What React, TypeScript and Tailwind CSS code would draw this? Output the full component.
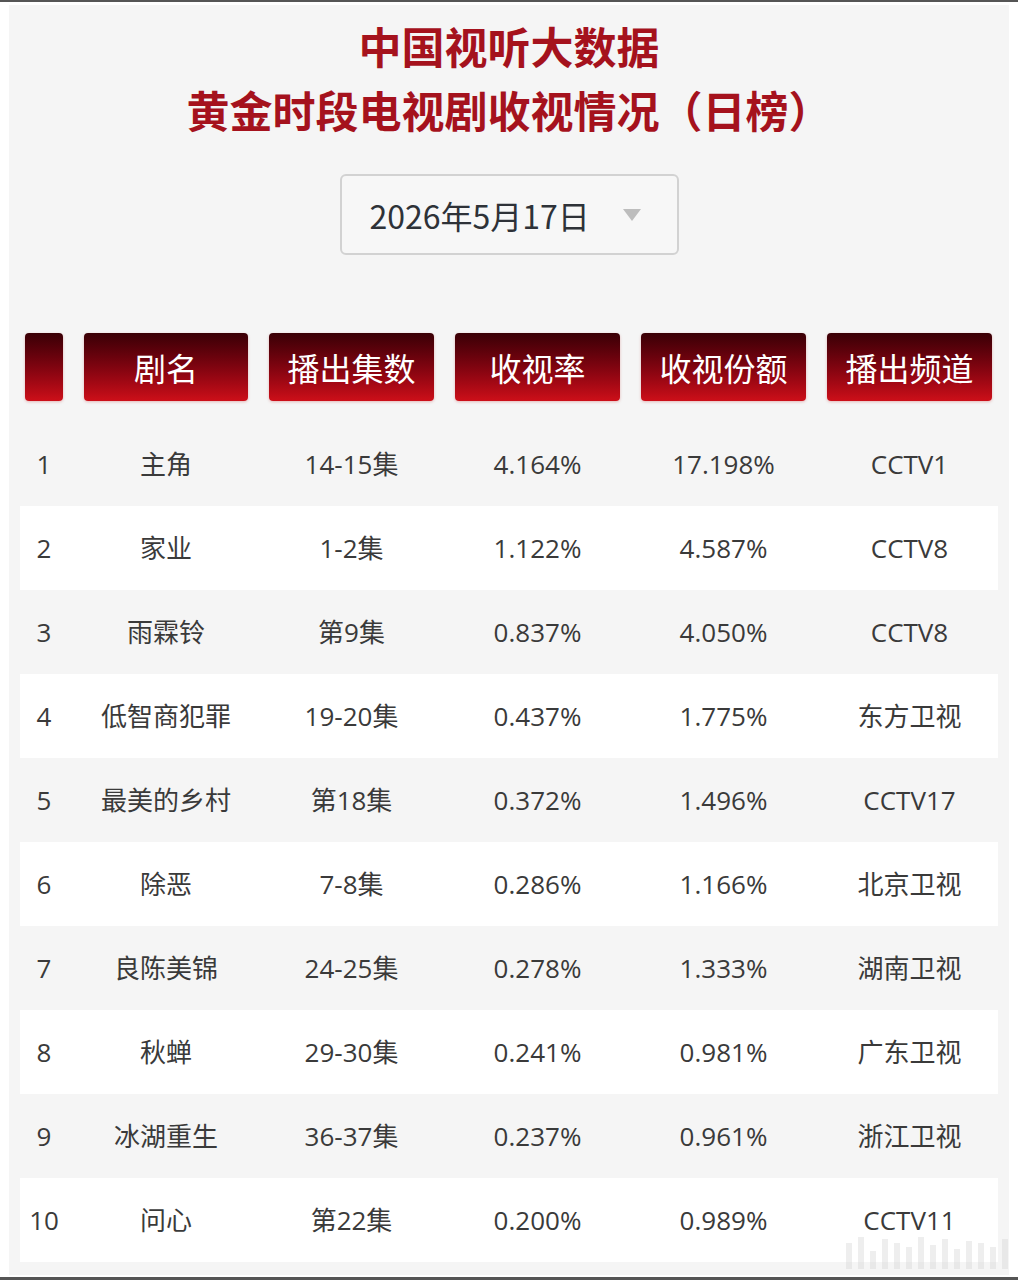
import React from 'react';

const rows = [
  { rank: 1, name: '主角', eps: '14-15集', rating: '4.164%', share: '17.198%', channel: 'CCTV1' },
  { rank: 2, name: '家业', eps: '1-2集', rating: '1.122%', share: '4.587%', channel: 'CCTV8' },
  { rank: 3, name: '雨霖铃', eps: '第9集', rating: '0.837%', share: '4.050%', channel: 'CCTV8' },
  { rank: 4, name: '低智商犯罪', eps: '19-20集', rating: '0.437%', share: '1.775%', channel: '东方卫视' },
  { rank: 5, name: '最美的乡村', eps: '第18集', rating: '0.372%', share: '1.496%', channel: 'CCTV17' },
  { rank: 6, name: '除恶', eps: '7-8集', rating: '0.286%', share: '1.166%', channel: '北京卫视' },
  { rank: 7, name: '良陈美锦', eps: '24-25集', rating: '0.278%', share: '1.333%', channel: '湖南卫视' },
  { rank: 8, name: '秋蝉', eps: '29-30集', rating: '0.241%', share: '0.981%', channel: '广东卫视' },
  { rank: 9, name: '冰湖重生', eps: '36-37集', rating: '0.237%', share: '0.961%', channel: '浙江卫视' },
  { rank: 10, name: '问心', eps: '第22集', rating: '0.200%', share: '0.989%', channel: 'CCTV11' },
];

const headers = ['剧名', '播出集数', '收视率', '收视份额', '播出频道'];

// shared column template so header and rows line up
const cols = 'grid grid-cols-[38px_164px_165px_165px_165px_165px] gap-x-[21px]';

function App() {
  return (
    <div
      className="relative w-[1018px] h-[1280px] bg-white border-t-2 border-b-[3px] border-[#555]"
      style={{ fontFamily: '"Open Sans", "Noto Sans CJK SC", sans-serif' }}
    >
      <div className="mx-[9px] mt-[3px] h-[1270px] bg-[#f5f5f5]">
        {/* Title */}
        <div
          className="pt-[8px] text-center font-bold text-[43px] leading-[64px] text-[#a5121d]"
          style={{ fontFamily: '"Noto Sans CJK SC", sans-serif' }}
        >
          <div>中国视听大数据</div>
          <div>黄金时段电视剧收视情况（日榜）</div>
        </div>

        {/* Date picker */}
        <div className="flex justify-center mt-[33px]">
          <div className="flex items-center w-[339px] h-[81px] rounded-[6px] border-2 border-[#d2d2d2] bg-[#f7f7f7] pl-[28px] pr-[36px]">
            <span
              className="text-[32px] text-[#2e3238]"
              style={{ fontFamily: '"Noto Sans CJK SC", sans-serif' }}
            >
              2026年5月17日
            </span>
            <span className="ml-auto w-0 h-0 border-l-[9px] border-r-[9px] border-t-[12px] border-l-transparent border-r-transparent border-t-[#bdbdbd]" />
          </div>
        </div>

        {/* Header */}
        <div className={`${cols} mt-[78px] pl-[16px] h-[68px]`}>
          <div className="rounded-[4px] bg-linear-to-b from-[#3a0006] to-[#cd0f19] shadow-[0_1px_3px_rgba(180,0,0,0.25)]" />
          {headers.map((h) => (
            <div
              key={h}
              className="flex items-center justify-center rounded-[4px] bg-linear-to-b from-[#3a0006] to-[#cd0f19] text-white text-[32px] shadow-[0_1px_3px_rgba(180,0,0,0.25)]"
              style={{ fontFamily: '"Noto Sans CJK SC", sans-serif' }}
            >
              {h}
            </div>
          ))}
        </div>

        {/* Rows */}
        <div className="mt-[21px] mx-[11px]">
          {rows.map((r, i) => (
            <div
              key={r.rank}
              className={`${cols} pl-[5px] h-[84px] items-center text-[26px] text-[#3a3a3a] ${
                i % 2 === 1 ? 'bg-white' : ''
              }`}
            >
              <div className="text-center">{r.rank}</div>
              <div className="text-center">{r.name}</div>
              <div className="text-center">{r.eps}</div>
              <div className="text-center">{r.rating}</div>
              <div className="text-center">{r.share}</div>
              <div className="text-center">{r.channel}</div>
            </div>
          ))}
        </div>
      </div>

      {/* faint watermark bars, bottom right */}
      <div className="absolute right-[10px] bottom-[8px] flex items-end gap-[6px] opacity-40">
        {[26, 32, 18, 30, 26, 22, 32, 24, 30, 20, 28, 26, 22, 30].map((h, i) => (
          <div key={i} className="w-[6px] bg-[#d6d6d6]" style={{ height: h }} />
        ))}
      </div>
    </div>
  );
}

export default App;
